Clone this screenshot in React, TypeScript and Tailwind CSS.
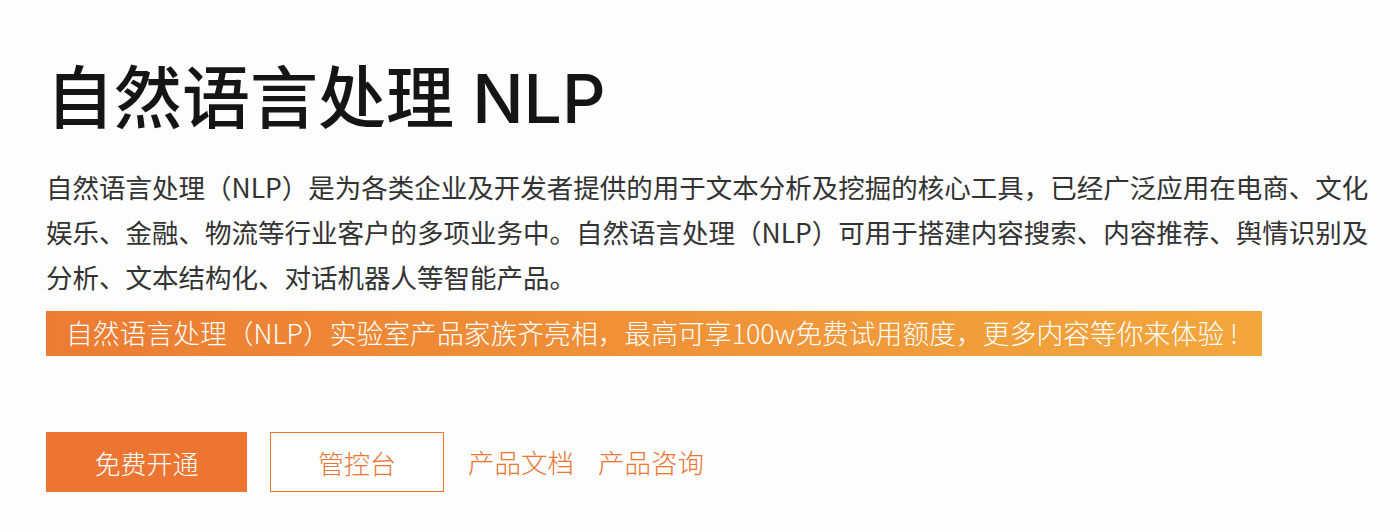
export default function App() {
  return (
    <div
      className="min-h-[532px] w-full bg-[#fdfdfd] pl-[46px]"
      style={{ fontFamily: '"Noto Sans CJK SC", "Noto Sans", sans-serif' }}
    >
      <h1
        className="pt-[57px] text-[68px] font-medium leading-[82px] text-[#151515]"
        style={{ fontFamily: 'Inter, "Noto Sans CJK SC", sans-serif' }}
      >
        自然语言处理 NLP
      </h1>

      <p className="mt-[25px] w-[1340px] text-[26.5px] leading-[45px] text-[#333333]">
        自然语言处理（NLP）是为各类企业及开发者提供的用于文本分析及挖掘的核心工具，已经广泛应用在电商、文化娱乐、金融、物流等行业客户的多项业务中。自然语言处理（NLP）可用于搭建内容搜索、内容推荐、舆情识别及分析、文本结构化、对话机器人等智能产品。
      </p>

      <div className="mt-[12px] flex h-[45px] w-[1216px] items-center bg-gradient-to-r from-[#ec7c33] to-[#f2a73d] pl-[20px] text-[26.8px] font-light text-white">
        自然语言处理（NLP）实验室产品家族齐亮相，最高可享100w免费试用额度，更多内容等你来体验 !
      </div>

      <div className="mt-[76px] flex items-center">
        <button
          type="button"
          className="flex h-[60px] w-[201px] items-center justify-center bg-[#ec7531] text-[26px] font-light text-white"
        >
          免费开通
        </button>
        <button
          type="button"
          className="ml-[23px] flex h-[60px] w-[174px] items-center justify-center border-[1.5px] border-[#ec7531] bg-white text-[26px] font-light text-[#ec7531]"
        >
          管控台
        </button>
        <a className="ml-[24px] text-[26.5px] font-light text-[#ec7531]">产品文档</a>
        <a className="ml-[24px] text-[26.5px] font-light text-[#ec7531]">产品咨询</a>
      </div>
    </div>
  );
}
